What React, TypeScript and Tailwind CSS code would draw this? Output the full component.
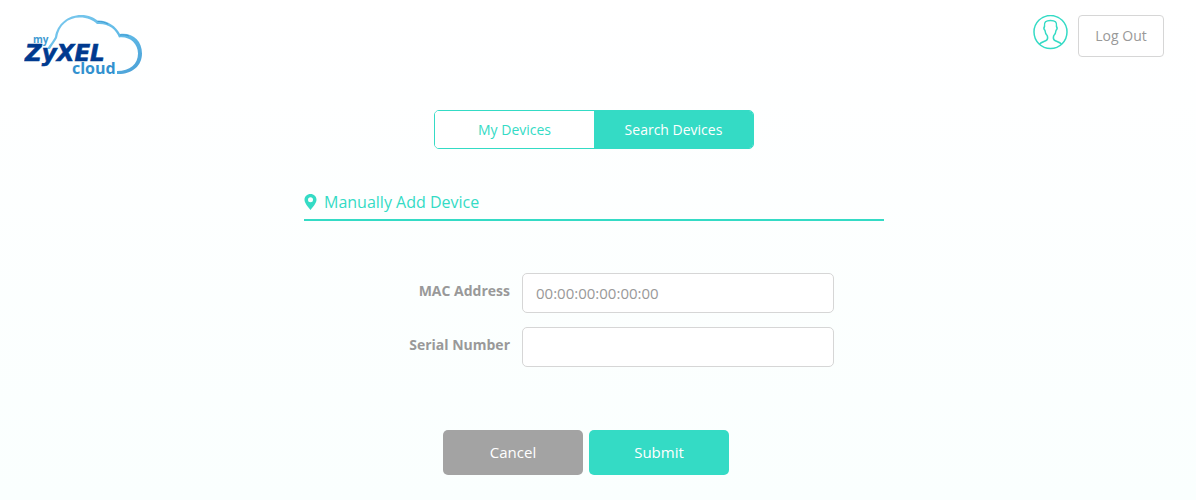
import { useState } from "react";

function Logo() {
  return (
    <svg width="120" height="66" viewBox="0 0 120 66" role="img" aria-label="my ZyXEL cloud">
      <defs>
        <linearGradient id="cloud" x1="0" y1="0" x2="1" y2="1">
          <stop offset="0" stopColor="#7cc9ee" />
          <stop offset="0.6" stopColor="#5fb9e6" />
          <stop offset="1" stopColor="#4a9fd6" />
        </linearGradient>
      </defs>
      <path
        fill="url(#cloud)"
        d="M23 35C26 30 29 27 31 23C33 10 44 1 57 1C65 1 70 3.500 73.500 6.500C83 6 92 12 96 20C109 18.500 118 27 118 39.500C118 52 108 60.500 93 60V57C106 57 114 50 114 39.500C114 29 105 22 95 23.500C92 15 84 9 73 10C69 6 63 3.500 56 3.500C44 3.500 35 11 33 24C31 28 28 31 26 35Z"
      />
      <path fill="none" stroke="#3f9bd2" strokeWidth="1" d="M73.500 7.500C78 7.300 81 8.300 84 10M96 21C99 20.500 102 21 105 22" />
      <g fontFamily="'Open Sans', sans-serif" fontWeight="700">
        <text x="9" y="29" fontSize="10" fill="#3f9bd2">my</text>
        <text x="48" y="60" fontSize="16" fill="#3291cf">cloud</text>
      </g>
      <text
        x="1"
        y="47"
        fontFamily="'DejaVu Sans', sans-serif"
        fontSize="23"
        fontWeight="700"
        fontStyle="italic"
        fill="#003a8f"
        stroke="#003a8f"
        strokeWidth="0.6"
      >
        ZyXEL
      </text>
    </svg>
  );
}

function Avatar() {
  return (
    <svg width="35" height="35" viewBox="0 0 35 35" fill="none" stroke="#34dbc5" strokeWidth="1.5" aria-hidden="true">
      <circle cx="17.500" cy="17" r="16.500" />
      <path d="M6.500 29C8 27.500 11 26.500 13.500 25.300C14.800 24.500 14.800 22.500 14.300 20.800C12.800 19.500 12.200 17.800 12 15.500C11 14.500 10.800 12.500 11.500 11.500C10.800 7 13 5.500 17.500 5.500C22 5.500 24.200 7 23.500 11.500C24.200 12.500 24 14.500 23 15.500C22.800 17.800 22.200 19.500 20.700 20.800C20.200 22.500 20.200 24.500 21.500 25.300C24 26.500 27 27.500 28.500 29" />
    </svg>
  );
}

function Pin() {
  return (
    <svg width="13" height="16" viewBox="0 0 13 16" aria-hidden="true">
      <path
        fill="#34dbc5"
        fillRule="evenodd"
        d="M6.500 0C10 0 12.500 2.500 12.500 5.800C12.500 9 9 13 6.500 16C4 13 .5 9 .5 5.800C.5 2.500 3 0 6.500 0ZM6.500 3.300A2.500 2.500 0 1 0 6.500 8.300A2.500 2.500 0 1 0 6.500 3.300Z"
      />
    </svg>
  );
}

const fieldClass =
  "h-10 w-78 rounded-[5px] border border-[#d6d6d6] bg-white px-[13px] text-[15px] text-[#999] outline-none placeholder:text-[#999] focus:border-[#34dbc5]";
const labelClass = "w-[206px] pb-1 text-right text-sm font-bold text-[#999]";

export default function App() {
  const [tab, setTab] = useState("search");
  const tabClass = "flex-1 cursor-pointer text-sm";
  const active = "bg-[#34dbc5] text-white";
  const idle = "bg-white text-[#34dbc5]";

  return (
    <div className="min-h-screen bg-linear-to-b from-white to-[#fafffe] pr-2 font-['Open_Sans',sans-serif]">
      <header className="flex items-start justify-between px-6 pt-3.5">
        <a href="#home">
          <Logo />
        </a>
        <div className="flex items-start gap-2.5 pt-px">
          <a href="#account" aria-label="Account">
            <Avatar />
          </a>
          <button
            type="button"
            className="h-[42px] w-[86px] cursor-pointer rounded border border-[#d6d6d6] bg-white text-sm text-[#999]"
          >
            Log Out
          </button>
        </div>
      </header>

      <main className="mx-auto flex max-w-[580px] flex-col pt-[30px]">
        <nav className="mx-auto flex h-[39px] w-80 overflow-hidden rounded-[5px] border border-[#34dbc5]">
          <button type="button" className={`${tabClass} ${tab === "mine" ? active : idle}`} onClick={() => setTab("mine")}>
            My Devices
          </button>
          <button type="button" className={`${tabClass} ${tab === "search" ? active : idle}`} onClick={() => setTab("search")}>
            Search Devices
          </button>
        </nav>

        <h1 className="mt-[41px] flex items-center gap-[7px] border-b-2 border-[#34dbc5] pb-[5px] text-base text-[#34dbc5]">
          <Pin />
          Manually Add Device
        </h1>

        <form className="flex flex-col pt-13" onSubmit={(e) => e.preventDefault()}>
          <div className="flex flex-col gap-3.5">
            <div className="flex items-center gap-3">
              <label htmlFor="mac" className={labelClass}>
                MAC Address
              </label>
              <input id="mac" type="text" placeholder="00:00:00:00:00:00" className={fieldClass} />
            </div>
            <div className="flex items-center gap-3">
              <label htmlFor="serial" className={labelClass}>
                Serial Number
              </label>
              <input id="serial" type="text" className={fieldClass} />
            </div>
          </div>
          <div className="flex justify-center gap-1.5 pt-[63px] pr-4 pb-6">
            <button type="button" className="h-[45px] w-35 cursor-pointer rounded-[5px] bg-[#a3a3a3] text-[15px] text-white">
              Cancel
            </button>
            <button type="submit" className="h-[45px] w-35 cursor-pointer rounded-[5px] bg-[#34dbc5] text-[15px] text-white">
              Submit
            </button>
          </div>
        </form>
      </main>
    </div>
  );
}
